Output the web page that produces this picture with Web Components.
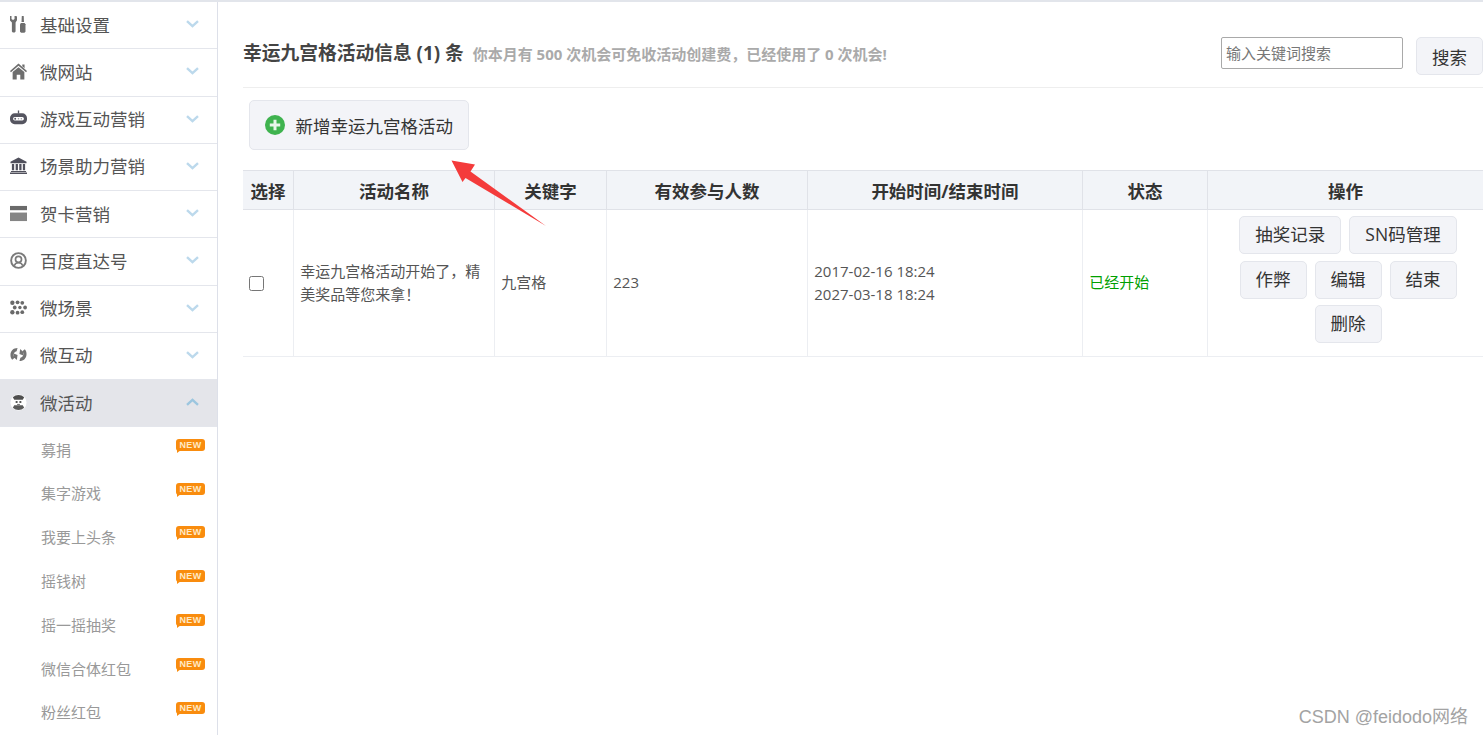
<!DOCTYPE html>
<html lang="zh">
<head>
<meta charset="utf-8">
<title>幸运九宫格</title>
<style>
    html, body { margin: 0; height: 100%; overflow: hidden; background: #fff; }
    body {
        font-family: "Open Sans", "Noto Sans CJK SC", sans-serif;
        color: #333;
        box-sizing: border-box;
        border-top: 2px solid #e2e5eb;
    }
    svg { display: block; }
</style>
</head>
<body>
<admin-page>
    <side-nav slot="nav">
        <nav-item label="基础设置">
            <svg slot="icon" viewBox="0 0 18 18" fill="#6e6e6e"><path d="M0 0h1.6v3.2l1.6 1 1.6-1V0h1.6l1 .6v4L5.9 7v9.4l-1 1.2H3l-1-1.2V7L-.1 4.6V.6z"/><path d="M12.5 0h2l.3 6.4h-2.6z"/><path d="M11.6 7.4h3.8l1 1.4v7.8l-1.2 1.2h-3.4l-1.2-1.2V8.8z"/></svg>
        </nav-item>
        <nav-item label="微网站">
            <svg slot="icon" viewBox="0 0 18 18" fill="#6e6e6e"><path d="M9 .5 18 8.6l-1 1.3L9 3 1 9.9 0 8.6z"/><path d="M2.8 9.6 9 4.4l6.2 5.2V17.500h-4.300v-5h-3.800v5H2.800z"/><path d="M13 1.500h2.400v4l-2.400-2z"/></svg>
        </nav-item>
        <nav-item label="游戏互动营销">
            <svg slot="icon" viewBox="0 0 18 18"><path d="M8.300.5h1.400v3.200H8.300z" fill="#555560"/><path fill-rule="evenodd" d="M5 3.500h8a5 5 0 0 1 5 5v1.500a5 5 0 0 1-5 5H5a5 5 0 0 1-5-5V8.500a5 5 0 0 1 5-5zm0 4a1.700 1.700 0 0 0 0 3.500h8a1.700 1.700 0 0 0 0-3.500z" fill="#555560"/><circle cx="5.500" cy="9.200" r="1" fill="#555560"/><circle cx="9" cy="9.200" r=".8" fill="#9a9aa2"/><circle cx="12" cy="9.200" r=".8" fill="#9a9aa2"/></svg>
        </nav-item>
        <nav-item label="场景助力营销">
            <svg slot="icon" viewBox="0 0 18 18" fill="#50505c"><path d="M9 .5 17.500 5v1.500H.5V5z"/><path d="M2 7.500h2.400v6.500H2zM6 7.500h2.400v6.500H6zM9.800 7.500h2.400v6.500H9.800zM13.600 7.500H16v6.500h-2.400z"/><path d="M1 14.800h16v1.200H1zM0 16.500h18V18H0z"/></svg>
        </nav-item>
        <nav-item label="贺卡营销">
            <svg slot="icon" viewBox="0 0 18 18"><path d="M0 1h18v4.500H0z" fill="#6a6a6a"/><path d="M0 8h18v9H0z" fill="#858585"/></svg>
        </nav-item>
        <nav-item label="百度直达号">
            <svg slot="icon" viewBox="0 0 18 18" fill="none" stroke="#7a7a7a"><circle cx="9" cy="9" r="7.800" stroke-width="2"/><circle cx="9" cy="7.800" r="3.200" stroke-width="1.800"/><path d="M4.500 14.500c1-2.200 2.600-3 4.500-3s3.500.8 4.500 3" stroke-width="1.600"/></svg>
        </nav-item>
        <nav-item label="微场景">
            <svg slot="icon" viewBox="0 0 18 18" fill="#6a6a6a"><circle cx="2.500" cy="4" r="2.300"/><circle cx="8" cy="3.500" r="2"/><circle cx="13" cy="4" r="2"/><circle cx="5" cy="9" r="2"/><circle cx="10.500" cy="9" r="1.800"/><circle cx="16" cy="9" r="2"/><circle cx="2.500" cy="14" r="2.300"/><circle cx="8" cy="14.500" r="2"/><circle cx="13" cy="14" r="2"/></svg>
        </nav-item>
        <nav-item label="微互动">
            <svg slot="icon" viewBox="0 0 18 18" fill="#747474"><path d="M8 2C3.500 2 .5 5 .5 9.500c0 2 .7 3.800 1.800 5l2.700-2c-.8-.8-1.200-1.800-1.200-3 0-2 1.400-3.500 3.200-4L8 2z"/><path d="M3.800 8 8 9.400l-.8 5.400L4.200 12z"/><path d="M10 16c4.500 0 7.500-3 7.500-7.500 0-2-.7-3.800-1.800-5l-2.700 2c.8.800 1.200 1.800 1.200 3 0 2-1.400 3.500-3.200 4L10 16z"/><path d="M14.200 10 10 8.600l.8-5.400L13.800 6z"/></svg>
        </nav-item>
        <nav-item label="微活动" open>
            <svg slot="icon" viewBox="0 0 18 18"><circle cx="9" cy="9" r="8.500" fill="#fff"/><path d="M3 3.500A8.500 8.500 0 0 1 15 3.500L13.500 6h-9z" fill="#4e4e4e"/><path d="M3 14.500a8.500 8.500 0 0 0 12 0L13.500 12h-9z" fill="#5a5a5a"/><path d="M6 7.500h2v2H6zM10 7.500h2v2h-2z" fill="#555"/><path d="M7.500 10.500h3v1.200h-3z" fill="#777"/></svg>
        </nav-item>
        <sub-item>募捐</sub-item>
        <sub-item>集字游戏</sub-item>
        <sub-item>我要上头条</sub-item>
        <sub-item>摇钱树</sub-item>
        <sub-item>摇一摇抽奖</sub-item>
        <sub-item>微信合体红包</sub-item>
        <sub-item>粉丝红包</sub-item>
    </side-nav>

    <page-header></page-header>

    <div class="toolbar" style="padding: 12px 0 20px 6px;">
        <action-button size="large">
            <svg slot="icon" width="20" height="20" viewBox="0 0 20 20"><circle cx="10" cy="10" r="10" fill="#3fb34f"/><path d="M8.500 4.800h3v3.700h3.700v3h-3.700v3.700h-3v-3.700H4.800v-3h3.700z" fill="#e8f6ea"/></svg>
            新增幸运九宫格活动
        </action-button>
    </div>

    <activity-table></activity-table>

    <!-- red arrow pasted on top of the screenshot -->
    <red-arrow></red-arrow>
    <water-mark>CSDN @feidodo网络</water-mark>
</admin-page>

<script>
class AdminPage extends HTMLElement {
    constructor() {
        super();
        this.attachShadow({ mode: 'open' });
        this.shadowRoot.innerHTML = `
            <style>
                :host {
                    display: flex;
                    height: 733px;
                    overflow: hidden;
                }
                .nav {
                    flex: 0 0 218px;
                }
                .main {
                    flex: 1;
                    min-width: 0;
                    padding-left: 25px;
                }
            </style>
            <div class="nav"><slot name="nav"></slot></div>
            <div class="main"><slot></slot></div>
        `;
    }
}
customElements.define('admin-page', AdminPage);

class SideNav extends HTMLElement {
    constructor() {
        super();
        this.attachShadow({ mode: 'open' });
        this.shadowRoot.innerHTML = `
            <style>
                :host {
                    display: block;
                    box-sizing: border-box;
                    width: 218px;
                    height: 733px;
                    overflow: hidden;
                    border-right: 1.5px solid #dde0e9;
                }
            </style>
            <slot></slot>
        `;
    }
}
customElements.define('side-nav', SideNav);

class NavItem extends HTMLElement {
    constructor() {
        super();
        this.attachShadow({ mode: 'open' });
        const open = this.hasAttribute('open');
        this.shadowRoot.innerHTML = `
            <style>
                :host {
                    display: flex;
                    align-items: center;
                    box-sizing: border-box;
                    height: 47.25px;
                    padding: 0 18px 2px 10px;
                    font-size: 17.5px;
                    color: #555;
                    border-bottom: 1px solid #e4e6ec;
                    background: ${open ? '#e4e5ea' : 'transparent'};
                }
                ::slotted(svg) {
                    width: 17px;
                    height: 17px;
                }
                .label {
                    flex: 1;
                    margin-left: 13px;
                }
                .arrow {
                    width: 13px;
                    height: 8px;
                    ${open ? 'transform: rotate(180deg);' : ''}
                }
            </style>
            <slot name="icon"></slot>
            <span class="label"></span>
            <svg class="arrow" viewBox="0 0 13 8" fill="none" stroke="${open ? '#9cc6df' : '#bcd9ec'}" stroke-width="2.400"><path d="M1 1.200 6.500 6.200 12 1.200"/></svg>
        `;
        this.shadowRoot.querySelector('.label').textContent = this.getAttribute('label');
    }
}
customElements.define('nav-item', NavItem);

class SubItem extends HTMLElement {
    constructor() {
        super();
        this.attachShadow({ mode: 'open' });
        this.shadowRoot.innerHTML = `
            <style>
                :host {
                    display: flex;
                    justify-content: space-between;
                    align-items: center;
                    box-sizing: border-box;
                    height: 43.8px;
                    padding: 0 12px 0 41px;
                    font-size: 15px;
                    color: #999;
                }
                .new {
                    position: relative;
                    align-self: flex-start;
                    margin-top: 11.500px;
                    width: 29px;
                    height: 12px;
                    border-radius: 3px;
                    background: #f98c0e;
                    color: #ffe9c4;
                    font: bold 9px/12px "Liberation Sans", sans-serif;
                    text-align: center;
                    letter-spacing: .3px;
                }
                .new::after {
                    content: '';
                    position: absolute;
                    left: 1px;
                    top: 11px;
                    border-top: 3px solid #f98c0e;
                    border-right: 4px solid transparent;
                }
            </style>
            <span><slot></slot></span>
            <span class="new">NEW</span>
        `;
    }
}
customElements.define('sub-item', SubItem);

class ActionButton extends HTMLElement {
    constructor() {
        super();
        this.attachShadow({ mode: 'open' });
        const large = this.getAttribute('size') === 'large';
        this.shadowRoot.innerHTML = `
            <style>
                :host {
                    display: inline-flex;
                    align-items: center;
                    justify-content: center;
                    box-sizing: border-box;
                    height: ${large ? '50px' : '38px'};
                    padding: 0 ${large ? '14.500px' : '15px'};
                    gap: 11px;
                    font-size: 17.5px;
                    font-weight: 400;
                    color: #333;
                    white-space: nowrap;
                    background: #f3f4f8;
                    border: 1px solid #e4e6ec;
                    border-radius: 5px;
                }
            </style>
            <slot name="icon"></slot>
            <slot></slot>
        `;
    }
}
customElements.define('action-button', ActionButton);

class PageHeader extends HTMLElement {
    constructor() {
        super();
        this.attachShadow({ mode: 'open' });
        this.shadowRoot.innerHTML = `
            <style>
                :host {
                    display: flex;
                    box-sizing: border-box;
                    height: 86px;
                    padding-top: 35px;
                    border-bottom: 1px solid #eeeeee;
                }
                h1 {
                    margin: 0;
                    font-size: 18.75px;
                    line-height: 32px;
                    font-weight: 700;
                    color: #444;
                }
                small {
                    margin-left: 9px;
                    font-size: 15px;
                    font-weight: 700;
                    color: #aaa;
                }
                .search {
                    margin-left: auto;
                    display: flex;
                    gap: 13px;
                    align-items: flex-start;
                }
                input {
                    box-sizing: border-box;
                    width: 182px;
                    height: 32px;
                    margin: 0;
                    padding: 0 4px;
                    font: 15px "Open Sans", "Noto Sans CJK SC", sans-serif;
                    border: 1px solid #a9a9a9;
                    border-radius: 2px;
                    outline: none;
                }
                input::placeholder { color: #777; }
            </style>
            <h1>幸运九宫格活动信息 (1) 条<small>你本月有 500 次机会可免收活动创建费，已经使用了 0 次机会!</small></h1>
            <div class="search">
                <input placeholder="输入关键词搜索">
                <action-button>搜索</action-button>
            </div>
        `;
    }
}
customElements.define('page-header', PageHeader);

class ActivityTable extends HTMLElement {
    constructor() {
        super();
        this.attachShadow({ mode: 'open' });
        this.shadowRoot.innerHTML = `
            <style>
                :host {
                    display: block;
                    font-size: 15px;
                    color: #555;
                }
                table {
                    table-layout: fixed;
                    border-collapse: collapse;
                    width: 1240px;
                }
                th {
                    height: 38px;
                    padding: 0;
                    font-size: 17.5px;
                    font-weight: 700;
                    color: #333;
                    background: #f2f4f8;
                    border: 1px solid #e0e2e8;
                    border-left-width: 1px;
                }
                td {
                    height: 146px;
                    padding: 0 6.250px;
                    line-height: 23.500px;
                    border: 1px solid #eceef2;
                    border-top: 0;
                }
                th:first-child, td:first-child { border-left: 0; }
                th:last-child, td:last-child { border-right: 0; }
                input[type=checkbox] {
                    display: block;
                    width: 15px;
                    height: 15px;
                    margin: 0;
                }
                .on { color: #00a000; }
                .ops {
                    display: flex;
                    flex-wrap: wrap;
                    justify-content: center;
                    gap: 6.500px 8px;
                    padding: 0 0 7px 5px;
                }
            </style>
            <table>
                <colgroup>
                    <col style="width:50.500px">
                    <col style="width:201px">
                    <col style="width:112px">
                    <col style="width:201px">
                    <col style="width:275px">
                    <col style="width:125px">
                    <col>
                </colgroup>
                <thead>
                    <tr>
                        <th>选择</th><th>活动名称</th><th>关键字</th><th>有效参与人数</th>
                        <th>开始时间/结束时间</th><th>状态</th><th>操作</th>
                    </tr>
                </thead>
                <tbody>
                    <tr>
                        <td><input type="checkbox"></td>
                        <td>幸运九宫格活动开始了，精美奖品等您来拿！</td>
                        <td>九宫格</td>
                        <td>223</td>
                        <td>2017-02-16 18:24<br>2027-03-18 18:24</td>
                        <td class="on">已经开始</td>
                        <td>
                            <div class="ops">
                                <action-button>抽奖记录</action-button>
                                <action-button>SN码管理</action-button>
                                <action-button>作弊</action-button>
                                <action-button>编辑</action-button>
                                <action-button>结束</action-button>
                                <action-button>删除</action-button>
                            </div>
                        </td>
                    </tr>
                </tbody>
            </table>
        `;
    }
}
customElements.define('activity-table', ActivityTable);

class RedArrow extends HTMLElement {
    constructor() {
        super();
        this.attachShadow({ mode: 'open' });
        this.shadowRoot.innerHTML = `
            <style>
                :host {
                    position: absolute;
                    left: 445px;
                    top: 155px;
                    pointer-events: none;
                }
            </style>
            <svg width="110" height="80" viewBox="0 0 110 80" style="display:block">
                <path d="M6.500 5.500 30 9.500 25.500 16.500 101 71 20.500 23 17.500 27z" fill="#f43b3b"/>
            </svg>
        `;
    }
}
customElements.define('red-arrow', RedArrow);

class WaterMark extends HTMLElement {
    constructor() {
        super();
        this.attachShadow({ mode: 'open' });
        this.shadowRoot.innerHTML = `
            <style>
                :host {
                    position: absolute;
                    right: 15px;
                    bottom: 7px;
                    font: 18px "Liberation Sans", "Noto Sans CJK SC", sans-serif;
                    color: #a3a3a3;
                }
            </style>
            <slot></slot>
        `;
    }
}
customElements.define('water-mark', WaterMark);
</script>
</body>
</html>
